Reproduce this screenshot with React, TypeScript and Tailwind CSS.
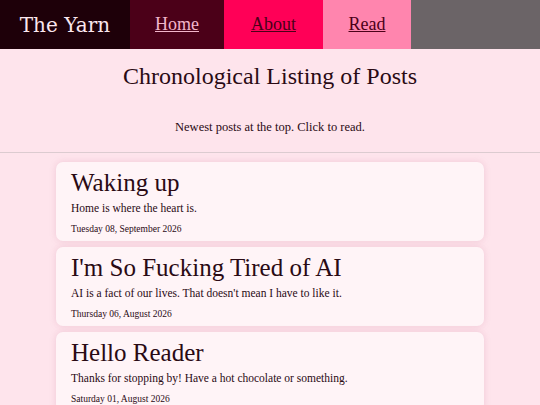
import React from "react";

const posts = [
  { title: "Waking up", desc: "Home is where the heart is.", date: "Tuesday 08, September 2026" },
  { title: "I'm So Fucking Tired of AI", desc: "AI is a fact of our lives. That doesn't mean I have to like it.", date: "Thursday 06, August 2026" },
  { title: "Hello Reader", desc: "Thanks for stopping by! Have a hot chocolate or something.", date: "Saturday 01, August 2026" },
];

export default function App() {
  const serif = { fontFamily: '"Liberation Serif", serif' };
  return (
    <div className="min-h-screen bg-[#fee4ec] text-[#2a0a14]" style={serif}>
      <nav className="flex h-[49px] items-stretch text-[18px]">
        <div className="flex w-[130px] items-center justify-center bg-[#1e0009] text-[20px] text-[#fbe7ee]" style={{ fontFamily: '"DejaVu Serif", serif' }}>
          The Yarn
        </div>
        <a className="flex w-[94px] items-center justify-center bg-[#4b0018] text-[#f3b6cb] underline" href="#">Home</a>
        <a className="flex w-[99px] items-center justify-center bg-[#ff0057] text-[#4b0018] underline" href="#">About</a>
        <a className="flex w-[88px] items-center justify-center bg-[#ff85ae] text-[#4b0018] underline" href="#">Read</a>
        <div className="flex-1 bg-[#6b6467]" />
      </nav>
      <header className="flex flex-col items-center border-b border-[#dccbd0] pb-[16px]">
        <h1 className="mt-[12px] text-[24px] leading-[30px]">Chronological Listing of Posts</h1>
        <p className="mt-[27px] text-[12.5px] leading-[18px]">Newest posts at the top. Click to read.</p>
      </header>
      <main className="flex flex-col gap-[6px] px-[56px] pt-[9px]">
        {posts.map((p) => (
          <div key={p.title} className="flex h-[79px] flex-col rounded-[7px] bg-[#fff4f7] px-[15px] pt-[6px] shadow-[0_0_6px_rgba(200,120,150,0.25)]">
            <h2 className="text-[25px] leading-[30px]">{p.title}</h2>
            <p className="mt-[2px] text-[11.5px] leading-[16px]">{p.desc}</p>
            <p className="mt-[7px] text-[9.5px] leading-[12px]">{p.date}</p>
          </div>
        ))}
      </main>
    </div>
  );
}
